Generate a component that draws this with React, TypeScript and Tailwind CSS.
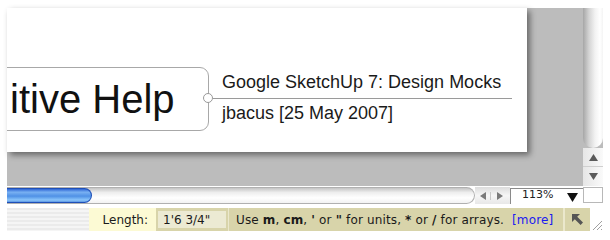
export default function App() {
  return (
    <div className="w-[610px] h-[240px] bg-white overflow-hidden flex flex-col pt-[8px] pl-[7px]">
      {/* top: canvas + vertical scrollbar */}
      <div className="flex h-[178px] w-[596px] shrink-0">
        <div className="w-[576px] h-full bg-[#bcbcbc]">
          <div className="w-[520px] h-[144px] bg-white shadow-[3px_3px_6px_rgba(0,0,0,0.45)] overflow-hidden pt-[59px] flex items-start font-['Liberation_Sans',Arial,sans-serif]">
            <div className="ml-[-40px] w-[242px] h-[64px] shrink-0 border border-[#a8a8a8] rounded-[9px] flex items-center pl-[42px] text-[40px] leading-[40px] text-[#111] whitespace-nowrap">
              itive Help
            </div>
            <div className="ml-[-6px] flex flex-col shrink-0">
              <div className="pl-[19px] mt-[5px] text-[18px] leading-[20px] text-[#1a1a1a] whitespace-nowrap">
                Google SketchUp 7: Design Mocks
              </div>
              <div className="flex items-center h-[10px] mt-[1px]">
                <div className="w-[10px] h-[10px] rounded-full border border-[#9a9a9a] bg-white shrink-0" />
                <div className="w-[299px] h-px bg-[#9a9a9a]" />
              </div>
              <div className="pl-[19px] text-[18px] leading-[20px] text-[#1a1a1a] whitespace-nowrap">
                jbacus [25 May 2007]
              </div>
            </div>
          </div>
        </div>
        {/* vertical scrollbar */}
        <div className="w-[20px] h-full flex flex-col bg-[#bcbcbc]">
          <div className="h-[140px] rounded-b-[10px] bg-[linear-gradient(90deg,#a6a6a6,#d4d4d4_30%,#f2f2f2_60%,#ffffff_85%,#f4f4f4)]" />
          <div className="h-[19px] flex items-center justify-center bg-[linear-gradient(90deg,#e6e6e6,#fafafa)] border-b border-[#cfcfcf]">
            <svg width="9" height="7" viewBox="0 0 9 7"><polygon points="4.5,0 9,7 0,7" fill="#5a5a5a" /></svg>
          </div>
          <div className="h-[19px] flex items-center justify-center bg-[linear-gradient(90deg,#e6e6e6,#fafafa)]">
            <svg width="9" height="7" viewBox="0 0 9 7"><polygon points="0,0 9,0 4.5,7" fill="#5a5a5a" /></svg>
          </div>
        </div>
      </div>

      {/* horizontal scrollbar row */}
      <div className="flex h-[18px] w-[596px] shrink-0">
        <div className="w-[468px] h-[17px] mt-[1px] rounded-r-[9px] bg-[linear-gradient(180deg,#c4c4c4,#eeeeee_30%,#ffffff_65%,#f2f2f2)] border-y border-r border-[#b0b0b0] flex overflow-hidden">
          <div className="w-[85px] h-full rounded-r-[8px] border-y border-r border-[#1f4fb8] bg-[linear-gradient(180deg,#2f67d6,#78b0f2_25%,#4f91e6_55%,#8cc6fb_85%,#5b95e2)]" />
        </div>
        <div className="w-[35px] h-[17px] mt-[1px] flex items-center bg-[linear-gradient(180deg,#dcdcdc,#f6f6f6_50%,#e8e8e8)]">
          <div className="w-[16px] flex justify-center border-r border-[#c8c8c8]">
            <svg width="6" height="8" viewBox="0 0 6 8"><polygon points="6,0 6,8 0,4" fill="#7a7a7a" /></svg>
          </div>
          <div className="w-[17px] flex justify-center">
            <svg width="6" height="8" viewBox="0 0 6 8"><polygon points="0,0 0,8 6,4" fill="#7a7a7a" /></svg>
          </div>
        </div>
        <div className="w-[73px] h-[16px] mt-[2px] bg-white border-t border-l border-[#8a8a8a] flex items-start pl-[11px] pr-[5px] font-['DejaVu_Sans',Verdana,sans-serif] text-[11px] leading-[12px] text-[#222]">
          <span>113%</span>
          <svg className="ml-auto mt-[4px]" width="11" height="9" viewBox="0 0 11 9"><polygon points="0,0 11,0 5.5,9" fill="#111" /></svg>
        </div>
        <div className="w-[20px] h-[16px] mt-[1px] bg-white border border-[#b8b8b8]" />
      </div>

      {/* status bar */}
      <div className="flex h-[23px] w-[596px] mt-[4px] shrink-0 font-['DejaVu_Sans',Verdana,sans-serif] text-[12px] text-[#1a1a1a]">
        <div className="w-[82px] h-full bg-[repeating-linear-gradient(180deg,#ebebeb_0px,#ebebeb_2px,#f5f5f5_2px,#f5f5f5_4px)]" />
        <div className="w-[67px] h-full bg-[#fcfad4] flex items-center justify-end pr-[8px]">Length:</div>
        <div className="w-[72px] h-full bg-[#d8d4aa] flex items-center px-[2px]">
          <div className="w-full h-[17px] bg-[#ecead3] flex items-center pl-[5px] whitespace-nowrap">1'6 3/4"</div>
        </div>
        <div className="w-px h-full bg-[#ebe8cc]" />
        <div className="w-[334px] h-full bg-[#d8d4aa] flex items-center pl-[7px] whitespace-nowrap tracking-[0.15px]">
          Use&nbsp;<b>m</b>,&nbsp;<b>cm</b>,&nbsp;<b>'</b>&nbsp;or&nbsp;<b>"</b>&nbsp;for units,&nbsp;<b>*</b>&nbsp;or&nbsp;<b>/</b>&nbsp;for arrays.&nbsp;&nbsp;<span className="text-[#1b1bf0]">[more]</span>
        </div>
        <div className="w-[2px] h-full bg-[#ebe8cc]" />
        <div className="w-[25px] h-full bg-[#d8d4aa] flex items-center justify-center">
          <svg width="13" height="13" viewBox="0 0 13 13">
            <polygon points="1,1 9,1 6.2,3.8 12,9.6 9.6,12 3.8,6.2 1,9" fill="#555" />
          </svg>
        </div>
        <div className="w-[13px] h-full bg-white flex items-end justify-end">
          <svg width="12" height="12" viewBox="0 0 12 12">
            <line x1="11" y1="2" x2="2" y2="11" stroke="#a0a0a0" strokeWidth="1" />
            <line x1="11" y1="6" x2="6" y2="11" stroke="#a0a0a0" strokeWidth="1" />
            <line x1="11" y1="10" x2="10" y2="11" stroke="#a0a0a0" strokeWidth="1" />
          </svg>
        </div>
      </div>
    </div>
  );
}
